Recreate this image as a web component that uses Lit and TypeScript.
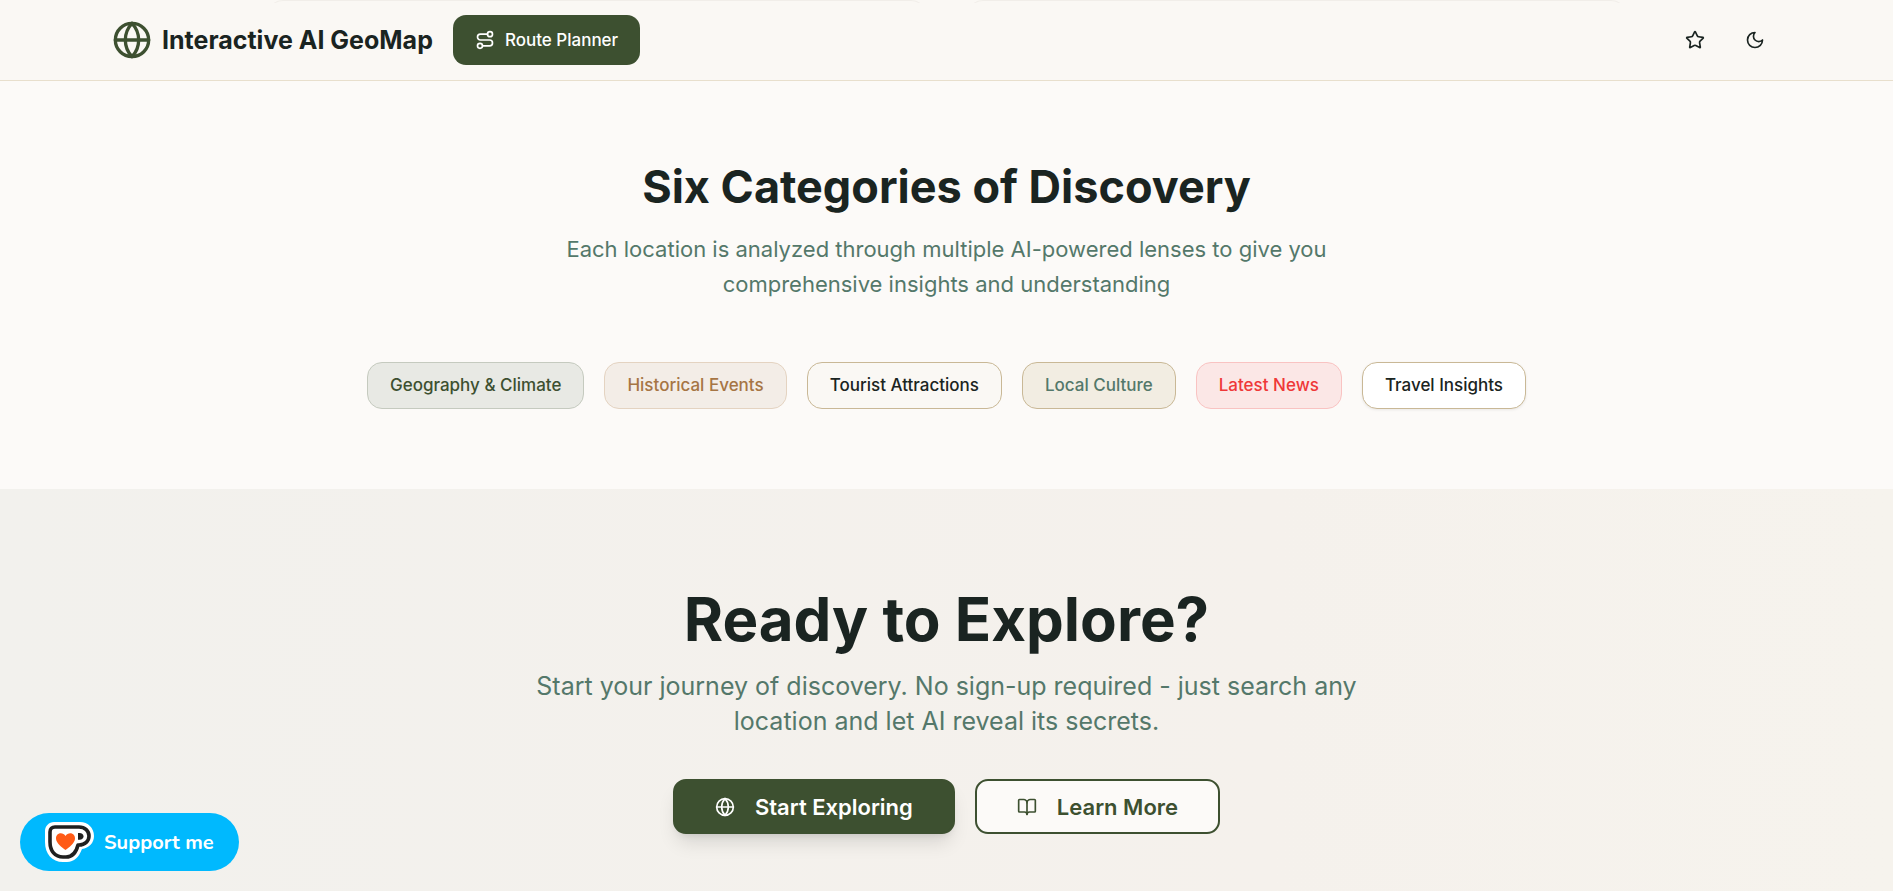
import { LitElement, html, css, svg } from "lit";
import { customElement } from "lit/decorators.js";

const icon = (paths: unknown, cls = "icon") => html`<svg class=${cls} viewBox="0 0 24 24" fill="none"
  stroke="currentColor" stroke-width="2" stroke-linecap="round" stroke-linejoin="round" aria-hidden="true">${paths}</svg>`;

const globe = svg`<circle cx="12" cy="12" r="10"/><path d="M12 2a14.5 14.5 0 0 0 0 20 14.5 14.5 0 0 0 0-20"/><path d="M2 12h20"/>`;
const route = svg`<circle cx="6" cy="19" r="3"/><path d="M9 19h8.5a3.5 3.5 0 0 0 0-7h-11a3.5 3.5 0 0 1 0-7H15"/><circle cx="18" cy="5" r="3"/>`;
const star = svg`<path d="M11.525 2.295a.53.53 0 0 1 .95 0l2.31 4.679a2.123 2.123 0 0 0 1.595 1.16l5.166.756a.53.53 0 0 1 .294.904l-3.736 3.638a2.123 2.123 0 0 0-.611 1.878l.882 5.14a.53.53 0 0 1-.771.56l-4.618-2.428a2.122 2.122 0 0 0-1.973 0L6.396 21.01a.53.53 0 0 1-.77-.56l.881-5.139a2.122 2.122 0 0 0-.611-1.879L2.16 9.795a.53.53 0 0 1 .294-.906l5.165-.755a2.122 2.122 0 0 0 1.597-1.16z"/>`;
const moon = svg`<path d="M12 3a6 6 0 0 0 9 9 9 9 0 1 1-9-9Z"/>`;
const book = svg`<path d="M12 7v14"/><path d="M3 18a1 1 0 0 1-1-1V4a1 1 0 0 1 1-1h5a4 4 0 0 1 4 4 4 4 0 0 1 4-4h5a1 1 0 0 1 1 1v13a1 1 0 0 1-1 1h-6a3 3 0 0 0-3 3 3 3 0 0 0-3-3z"/>`;

const categories = [
  { name: "Geography & Climate", tone: "geography" },
  { name: "Historical Events", tone: "history" },
  { name: "Tourist Attractions", tone: "tourist" },
  { name: "Local Culture", tone: "culture" },
  { name: "Latest News", tone: "news" },
  { name: "Travel Insights", tone: "travel" },
];

@customElement("app-root")
export class AppRoot extends LitElement {
  static styles = css`
    :host {
      --ink: #1a2421;
      --green: #3d5030;
      --muted: #54786a;
      --page: #fcfaf8;
      display: flex;
      flex-direction: column;
      min-height: 100vh;
      background: var(--page);
      color: var(--ink);
      font-family: Inter, "Liberation Sans", sans-serif;
    }
    * { box-sizing: border-box; }
    h1, h2, p, ul { margin: 0; padding: 0; }
    button { font: inherit; color: inherit; cursor: pointer; }
    .icon { width: 20px; height: 20px; flex: none; }
    .header {
      position: relative;
      background: #faf8f4;
      border-bottom: 1px solid #e8dfcd;
    }
    .cards {
      position: absolute;
      inset: 0 0 auto;
      display: grid;
      grid-template-columns: 1fr 1fr;
      gap: 40px;
      max-width: 1360px;
      height: 3px;
      margin: 0 auto;
      overflow: hidden;
    }
    .card-edge {
      align-self: end;
      height: 40px;
      border: 1px solid #f1eee9;
      border-bottom-width: 2px;
      border-radius: 16px;
    }
    .bar {
      display: flex;
      align-items: center;
      justify-content: space-between;
      max-width: 1709px;
      margin: 0 auto;
      padding: 15px 20px;
    }
    .brand, .actions { display: flex; align-items: center; }
    .brand { gap: 20px; }
    .actions { gap: 8px; }
    .logo { display: flex; align-items: center; gap: 10px; }
    .mark { width: 40px; height: 40px; color: var(--green); }
    .title { font-size: 25px; line-height: 35px; font-weight: 700; }
    .planner {
      display: flex;
      align-items: center;
      gap: 10px;
      height: 50px;
      padding: 0 22px;
      border: 0;
      border-radius: 13px;
      background: var(--green);
      color: #fff;
      font-size: 17px;
      font-weight: 500;
    }
    .round {
      display: grid;
      place-items: center;
      width: 52px;
      height: 50px;
      padding: 0;
      border: 0;
      background: none;
    }
    .categories, .explore {
      display: flex;
      flex-direction: column;
      align-items: center;
      text-align: center;
    }
    .categories { padding: 81px 20px 80px; }
    .heading { font-size: 45px; line-height: 50px; font-weight: 700; margin-bottom: 20px; }
    .lead { max-width: 840px; font-size: 22px; line-height: 35px; color: var(--muted); }
    .chips {
      display: flex;
      flex-wrap: wrap;
      justify-content: center;
      gap: 20px;
      margin-top: 60px;
      list-style: none;
    }
    .chip {
      padding: 10px 22px;
      border: 1px solid #c9b896;
      border-radius: 15px;
      font-size: 17px;
      line-height: 25px;
      font-weight: 500;
    }
    .geography { background: #e8e9e4; border-color: #c5cabf; color: var(--green); }
    .history { background: #f3ede7; border-color: #e4d3c1; color: #a67544; }
    .tourist { background: #faf8f4; }
    .culture { background: #f2ede2; color: var(--muted); }
    .news { background: #fbe7e6; border-color: #f9c3c2; color: #ef3838; }
    .travel { background: #fff; box-shadow: 0 1px 3px rgb(0 0 0 / 8%); }
    .explore {
      flex: 1;
      padding: 100px 20px 57px;
      background: linear-gradient(to right, #f2f1ed, #f5f1ec 67%, #f6f3ed);
    }
    .display { font-size: 60px; line-height: 60px; font-weight: 700; margin-bottom: 20px; }
    .large { font-size: 25px; }
    .buttons { display: flex; flex-wrap: wrap; justify-content: center; gap: 20px; margin-top: 40px; }
    .cta {
      display: flex;
      align-items: center;
      gap: 20px;
      height: 55px;
      padding: 0 40px;
      border: 2px solid var(--green);
      border-radius: 13px;
      font-size: 22px;
      font-weight: 600;
    }
    .primary {
      background: var(--green);
      color: #fff;
      box-shadow: 0 12px 19px -4px rgb(0 0 0 / 12%), 0 5px 8px -5px rgb(0 0 0 / 12%);
    }
    .outline { background: var(--page); color: var(--green); }
    .support {
      position: fixed;
      left: 20px;
      bottom: 20px;
      display: flex;
      align-items: center;
      gap: 10px;
      height: 58px;
      padding: 0 25px;
      border: 0;
      border-radius: 29px;
      background: #00b9fe;
      color: #fff;
      font-family: Nunito, "Open Sans", sans-serif;
      font-size: 20px;
      font-weight: 700;
    }
    .cup { width: 49px; height: 40px; }
  `;

  render() {
    return html`
      <header class="header">
        <div class="cards" aria-hidden="true"><div class="card-edge"></div><div class="card-edge"></div></div>
        <div class="bar">
          <div class="brand">
            <div class="logo">${icon(globe, "mark")}<h1 class="title">Interactive AI GeoMap</h1></div>
            <button class="planner">${icon(route)}Route Planner</button>
          </div>
          <div class="actions">
            <button class="round" aria-label="Favorites">${icon(star)}</button>
            <button class="round" aria-label="Toggle dark mode">${icon(moon)}</button>
          </div>
        </div>
      </header>
      <section class="categories">
        <h2 class="heading">Six Categories of Discovery</h2>
        <p class="lead">Each location is analyzed through multiple AI-powered lenses to give you comprehensive insights and understanding</p>
        <ul class="chips">${categories.map((c) => html`<li class="chip ${c.tone}">${c.name}</li>`)}</ul>
      </section>
      <section class="explore">
        <h2 class="display">Ready to Explore?</h2>
        <p class="lead large">Start your journey of discovery. No sign-up required - just search any location and let AI reveal its secrets.</p>
        <div class="buttons">
          <button class="cta primary">${icon(globe)}Start Exploring</button>
          <button class="cta outline">${icon(book)}Learn More</button>
        </div>
      </section>
      <button class="support">
        <svg class="cup" viewBox="0 0 49 40" aria-hidden="true">
          <path fill="#fff" d="M9 0H35C43 0 49 6 49 14C49 21 44 26 37 27C34 35 29 40 22 40H18C7 40 0 32 0 20V9C0 4 4 0 9 0Z"/>
          <path fill="#fff" stroke="#202020" stroke-width="3.6" stroke-linejoin="round" d="M10 5H34C40 5 44 9 44 14C44 19 40 23 34 23H33C31 31 27 35 21 35H18C10 35 5 29 5 20V10C5 7 7 5 10 5Z"/>
          <path fill="#202020" d="M33 11H34.500C37 11 38.500 12.300 38.500 14.200C38.500 16.400 37 17.700 34.500 17.700H33Z"/>
          <path fill="#ff5a16" d="M20.500 28C17 25.500 11 21 11 16.500C11 13.400 13 11.300 15.700 11.300C17.700 11.300 19.400 12.300 20.500 14C21.600 12.300 23.300 11.300 25.300 11.300C28 11.300 30 13.400 30 16.500C30 21 24 25.500 20.500 28Z"/>
        </svg>
        Support me
      </button>
    `;
  }
}
